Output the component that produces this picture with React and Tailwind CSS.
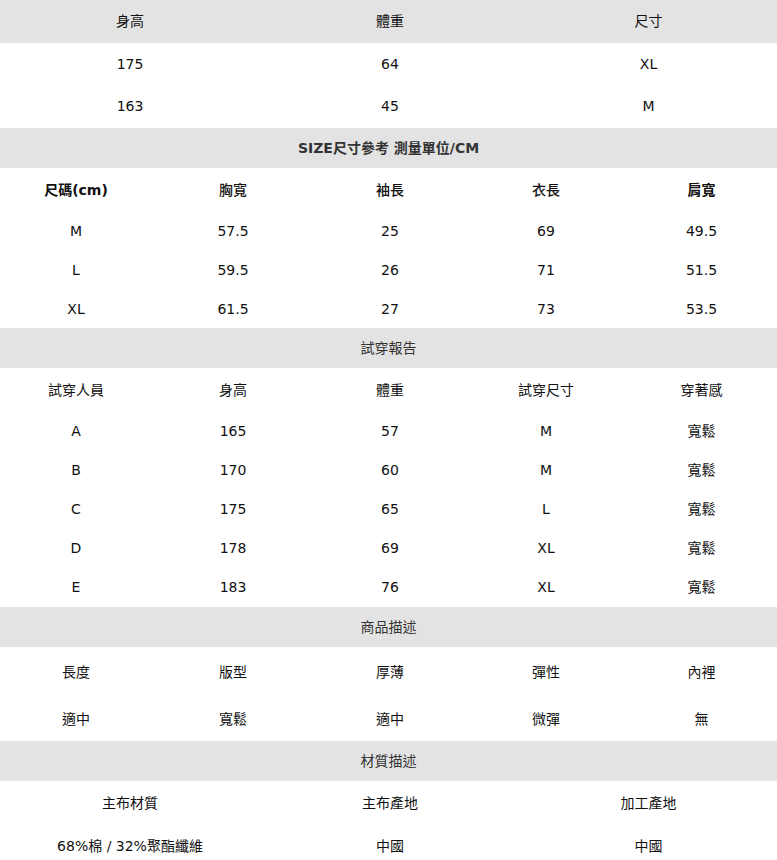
const font = { fontFamily: '"DejaVu Sans", Verdana, "Noto Sans CJK TC", sans-serif' }

function Section({ title, bold }) {
  return (
    <div className={`h-[40px] bg-[#e3e3e3] flex items-center justify-center text-[14px] text-[#333] ${bold ? 'font-bold' : ''}`}>
      {title}
    </div>
  )
}

function Row({ cells, h, cols, weights }) {
  return (
    <div className={`grid ${cols} ${h} items-center text-[14px] text-[#111]`}>
      {cells.map((c, i) => (
        <div key={i} className={`text-center ${weights ? weights[i] : ''}`}>{c}</div>
      ))}
    </div>
  )
}

export default function App() {
  const five = 'grid-cols-[152px_162px_152px_160px_151px]'
  const three = 'grid-cols-[260px_260px_257px]'
  const sizeHead = ['font-bold', 'font-medium', 'font-medium', 'font-medium', 'font-bold']

  return (
    <div className="w-[777px] bg-white" style={font}>
      <div className="h-[43px] bg-[#e3e3e3] grid grid-cols-[260px_260px_257px] items-center text-[14px] text-[#111]">
        <div className="text-center">身高</div>
        <div className="text-center">體重</div>
        <div className="text-center">尺寸</div>
      </div>
      <Row cells={['175', '64', 'XL']} h="h-[42px]" cols={three} />
      <Row cells={['163', '45', 'M']} h="h-[43px]" cols={three} />

      <Section title="SIZE尺寸參考 測量單位/CM" bold />
      <Row cells={['尺碼(cm)', '胸寬', '袖長', '衣長', '肩寬']} h="h-[44px]" cols={five} weights={sizeHead} />
      <Row cells={['M', '57.5', '25', '69', '49.5']} h="h-[39px]" cols={five} />
      <Row cells={['L', '59.5', '26', '71', '51.5']} h="h-[39px]" cols={five} />
      <Row cells={['XL', '61.5', '27', '73', '53.5']} h="h-[38px]" cols={five} />

      <Section title="試穿報告" />
      <Row cells={['試穿人員', '身高', '體重', '試穿尺寸', '穿著感']} h="h-[44px]" cols={five} />
      <Row cells={['A', '165', '57', 'M', '寬鬆']} h="h-[39px]" cols={five} />
      <Row cells={['B', '170', '60', 'M', '寬鬆']} h="h-[39px]" cols={five} />
      <Row cells={['C', '175', '65', 'L', '寬鬆']} h="h-[39px]" cols={five} />
      <Row cells={['D', '178', '69', 'XL', '寬鬆']} h="h-[39px]" cols={five} />
      <Row cells={['E', '183', '76', 'XL', '寬鬆']} h="h-[39px]" cols={five} />

      <Section title="商品描述" />
      <Row cells={['長度', '版型', '厚薄', '彈性', '內裡']} h="h-[51px]" cols={five} />
      <Row cells={['適中', '寬鬆', '適中', '微彈', '無']} h="h-[43px]" cols={five} />

      <Section title="材質描述" />
      <Row cells={['主布材質', '主布產地', '加工產地']} h="h-[45px]" cols={three} />
      <Row cells={['68%棉 / 32%聚酯纖維', '中國', '中國']} h="h-[40px]" cols={three} />
    </div>
  )
}
